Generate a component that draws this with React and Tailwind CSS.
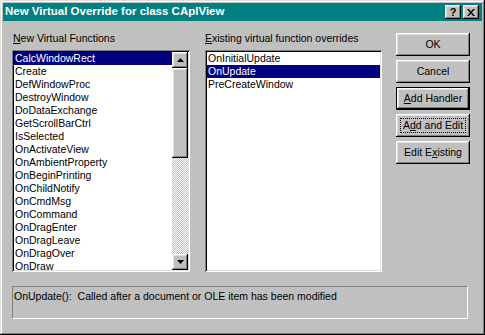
import React from 'react';

const leftItems = [
  'CalcWindowRect',
  'Create',
  'DefWindowProc',
  'DestroyWindow',
  'DoDataExchange',
  'GetScrollBarCtrl',
  'IsSelected',
  'OnActivateView',
  'OnAmbientProperty',
  'OnBeginPrinting',
  'OnChildNotify',
  'OnCmdMsg',
  'OnCommand',
  'OnDragEnter',
  'OnDragLeave',
  'OnDragOver',
  'OnDraw',
];

const rightItems = ['OnInitialUpdate', 'OnUpdate', 'PreCreateWindow'];

const raised =
  'bg-[#c0c0c0] shadow-[inset_-1px_-1px_#000,inset_1px_1px_#fff,inset_-2px_-2px_#808080,inset_2px_2px_#dfdfdf]';
const sunken =
  'bg-white shadow-[inset_1px_1px_#808080,inset_-1px_-1px_#fff,inset_2px_2px_#000,inset_-2px_-2px_#dfdfdf]';

function Arrow({ up }) {
  return (
    <svg width="7" height="4" viewBox="0 0 7 4">
      {up ? <path d="M3.5 0 L7 4 L0 4 Z" fill="#000" /> : <path d="M0 0 L7 0 L3.5 4 Z" fill="#000" />}
    </svg>
  );
}

function Row({ text, selected }) {
  return (
    <div
      className={`h-[13px] leading-[13px] pl-[1px] whitespace-nowrap ${
        selected ? 'bg-[#000080] text-white' : 'text-black'
      }`}
    >
      {text}
    </div>
  );
}

function Button({ children, def, focus }) {
  if (def) {
    return (
      <div className="h-[23px] w-[74px] border border-black">
        <div className={`h-full w-full flex items-center justify-center ${raised}`}>{children}</div>
      </div>
    );
  }
  return (
    <div className={`h-[23px] w-[74px] flex items-center justify-center ${raised}`}>
      {focus ? (
        <div className="border border-dotted border-black px-[2px] leading-[13px]">{children}</div>
      ) : (
        children
      )}
    </div>
  );
}

export default function App() {
  return (
    <div
      className="w-[485px] h-[335px] p-[3px] bg-[#c0c0c0] shadow-[inset_-1px_-1px_#000,inset_1px_1px_#dfdfdf,inset_-2px_-2px_#808080,inset_2px_2px_#fff] text-[10.5px] text-black flex flex-col"
      style={{ fontFamily: '"Liberation Sans", Arial, sans-serif' }}
    >
      {/* title bar */}
      <div className="h-[18px] bg-[#008080] flex items-center pl-[2px] pr-[3px]">
        <span className="text-white font-bold text-[11.5px] flex-1">New Virtual Override for class CAplView</span>
        <div className={`w-[16px] h-[14px] flex items-center justify-center font-bold text-[11px] leading-none ${raised}`}>
          ?
        </div>
        <div className={`w-[16px] h-[14px] ml-[2px] flex items-center justify-center ${raised}`}>
          <svg width="8" height="7" viewBox="0 0 8 7">
            <path d="M0 0h2l2 2.5L6 0h2L5 3.5 8 7H6L4 4.5 2 7H0l3-3.5z" fill="#000" />
          </svg>
        </div>
      </div>

      {/* body */}
      <div className="flex pl-[9px] pt-[11px]">
        <div className="w-[178px] flex flex-col">
          <div className="h-[13px] leading-[13px] pl-[1px]">
            <span className="underline">N</span>ew Virtual Functions
          </div>
          <div className={`mt-[5px] h-[222px] p-[2px] flex ${sunken}`}>
            <div className="flex-1 overflow-hidden">
              {leftItems.map((t, i) => (
                <Row key={t} text={t} selected={i === 0} />
              ))}
            </div>
            <div className="w-[16px] flex flex-col">
              <div className={`h-[16px] flex items-center justify-center ${raised}`}>
                <Arrow up />
              </div>
              <div className={`h-[90px] ${raised}`} />
              <div className="h-[96px] bg-[repeating-conic-gradient(#c0c0c0_0_25%,#fff_0_50%)] bg-[length:2px_2px]" />
              <div className={`h-[16px] flex items-center justify-center ${raised}`}>
                <Arrow />
              </div>
            </div>
          </div>
        </div>

        <div className="w-[177px] ml-[15px] flex flex-col">
          <div className="h-[13px] leading-[13px]">
            <span className="underline">E</span>xisting virtual function overrides
          </div>
          <div className={`mt-[5px] h-[222px] p-[2px] ${sunken}`}>
            {rightItems.map((t, i) => (
              <Row key={t} text={t} selected={i === 1} />
            ))}
          </div>
        </div>

        <div className="ml-[14px] pt-[1px] flex flex-col gap-[4px]">
          <Button>OK</Button>
          <Button>Cancel</Button>
          <Button def>
            <span>
              <span className="underline">A</span>dd Handler
            </span>
          </Button>
          <Button focus>
            <span>
              A<span className="underline">d</span>d and Edit
            </span>
          </Button>
          <Button>
            <span>
              Edit E<span className="underline">x</span>isting
            </span>
          </Button>
        </div>
      </div>

      {/* status */}
      <div className="ml-[9px] mt-[14px] w-[456px] h-[33px] border border-t-[#808080] border-l-[#808080] border-b-white border-r-white pl-[1px] pt-[3px] leading-[13px]">
        OnUpdate():&nbsp; Called after a document or OLE item has been modified
      </div>
    </div>
  );
}
